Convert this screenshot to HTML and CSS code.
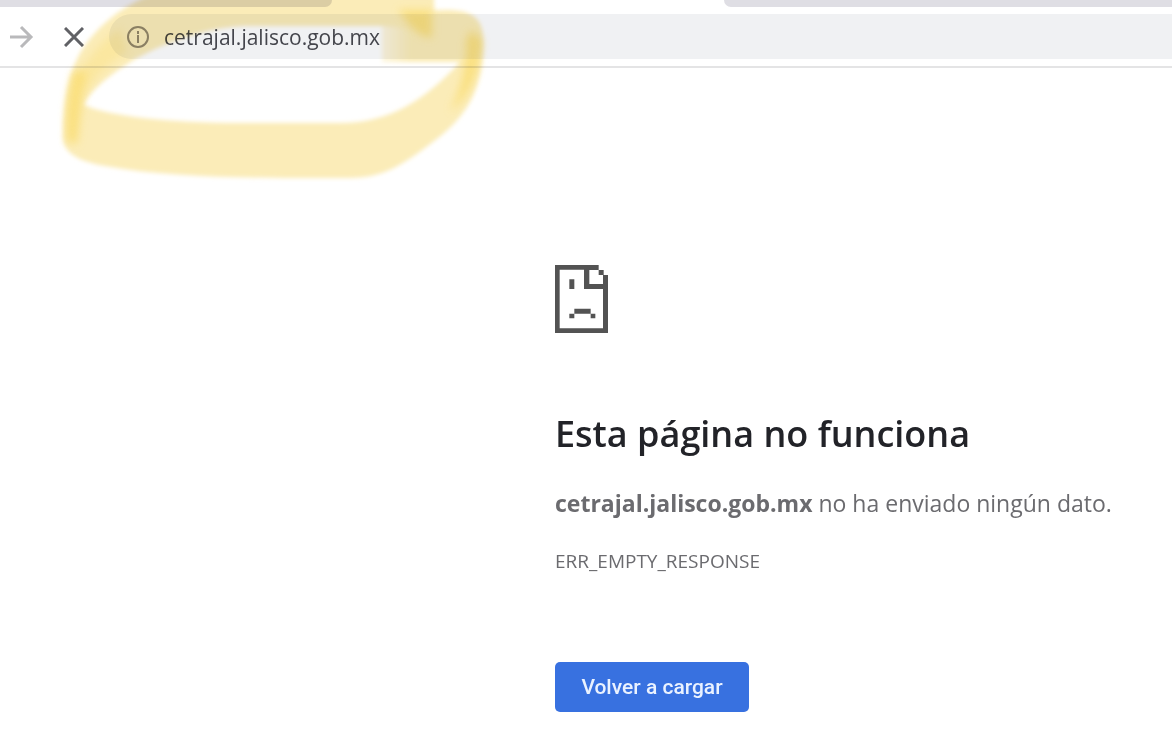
FILE: index.html
```html
<!DOCTYPE html>
<html lang="es">
<head>
	<meta charset="utf-8">
	<title>cetrajal.jalisco.gob.mx</title>
	<link rel="stylesheet" href="styles.css">
</head>

<body>

	<header class="browser">
		<div class="tabs">
			<div class="tab tab-left"></div>
			<div class="tab tab-right"></div>
		</div>
		<div class="toolbar">
			<button type="button" class="nav" aria-label="Adelante" disabled>
				<svg width="24" height="24" viewBox="0 0 24 24"><path d="M0 12H21M11 2L21 12L11 22"/></svg>
			</button>
			<button type="button" class="nav stop" aria-label="Detener">
				<svg width="20" height="20" viewBox="0 0 20 20"><path d="M1 1L19 19M19 1L1 19"/></svg>
			</button>
			<div class="address">
				<svg class="info" width="24" height="24" viewBox="0 0 24 24">
					<circle cx="12" cy="12" r="10"/>
					<path d="M12 10V18M12 6V9"/>
				</svg>
				<input type="text" class="url" aria-label="Dirección" value="cetrajal.jalisco.gob.mx">
			</div>
		</div>
	</header>

	<main class="error">
		<svg class="sad" width="53" height="68" viewBox="0 0 159 204">
			<path d="M0 0H131V15H103V57H144V30H159V204H0ZM14 14V190H144V72H87V14Z"/>
			<path d="M131 15H146V30H131ZM43 43H58V72H43ZM58 131H107V146H58ZM43 146H58V160H43ZM107 146H121V160H107Z"/>
		</svg>
		<h1>Esta página no funciona</h1>
		<p class="summary"><strong>cetrajal.jalisco.gob.mx</strong> no ha enviado ningún dato.</p>
		<p class="code">ERR_EMPTY_RESPONSE</p>
		<button type="button" class="reload">Volver a cargar</button>
	</main>

	<!-- highlighter stroke round the address -->
	<svg class="marker" width="500" height="190" viewBox="0 0 500 190">
		<defs>
			<filter id="soft"><feGaussianBlur stdDeviation="2"/></filter>
			<filter id="softer" x="-50%" y="-50%" width="200%" height="200%"><feGaussianBlur stdDeviation="4"/></filter>
			<linearGradient id="fade" gradientUnits="userSpaceOnUse" x1="380" y1="0" x2="410" y2="0">
				<stop offset="0" stop-color="#fbecb8" stop-opacity="0.4"/>
				<stop offset="1" stop-color="#fbecb8"/>
			</linearGradient>
		</defs>
		<g class="ink" filter="url(#soft)">
			<path d="M63 140C63 100 68 70 85 45C105 18 130 2 158 -8H434V34Q425 42 415 36Q404 26 385 26H245C200 28 160 45 132 61C105 78 92 90 84 104L78 145Z"/>
			<path d="M430 11C466 7 483 14 483 38C484 78 474 108 443 134C405 164 385 178 350 178C250 178 170 178 105 166C70 160 61 148 63 132C63 118 66 105 70 94L84 105C108 116 170 123 240 123H340C390 123 425 100 460 62H430Z"/>
			<path fill="url(#fade)" d="M382 26L404 26Q415 40 434 36V62H382Z"/>
		</g>
		<g class="ink-dark" filter="url(#softer)">
			<path d="M73 72Q64 105 67 142L77 144L86 70Z"/>
			<path d="M466 40Q468 75 450 112Q478 90 482 40L471 30Z"/>
			<path d="M398 10H432V38Q422 38 410 26Z"/>
		</g>
		<path class="ink-dark ink-light" filter="url(#softer)" d="M78 75Q95 45 120 28L128 52Q98 70 84 95Z"/>
	</svg>

</body>

</html>
```

FILE: styles.css
```css
* {
	box-sizing: border-box;
}

body {
	margin: 0;
	position: relative;
	background: #fff;
	color: #6b6b6f;
	font-family: "Open Sans", "Noto Sans", sans-serif;
}

.browser {
	border-bottom: 2px solid #e4e4e5;
}

.tabs {
	display: flex;
	justify-content: space-between;
	height: 7px;
}

.tab {
	background: #dfdee4;
}

.tab-left {
	width: 332px;
	border-bottom-right-radius: 8px;
}

.tab-right {
	width: calc(100% - 724px);
	border-bottom-left-radius: 10px;
}

.toolbar {
	display: flex;
	align-items: center;
	padding: 7px 0 7px 10px;
}

.nav {
	display: flex;
	justify-content: center;
	width: 24px;
	margin-right: 28px;
	padding: 0;
	border: 0;
	background: none;
}

.nav path {
	fill: none;
	stroke: #b9b9bb;
	stroke-width: 3;
}

.nav.stop {
	margin-right: 23px;
}

.stop path {
	stroke: #606165;
}

.address {
	flex: 1;
	display: flex;
	align-items: center;
	gap: 14px;
	height: 45px;
	padding-left: 17px;
	border-radius: 23px 0 0 23px;
	background: #f0f1f3;
}

.info {
	flex: none;
	fill: none;
	stroke: #8c8988;
	stroke-width: 2;
}

.url {
	flex: 1;
	min-width: 0;
	padding: 0;
	border: 0;
	outline: 0;
	background: none;
	color: #44454c;
	font-family: inherit;
	font-size: 21px;
}

.error {
	margin: 197px 0 0 555px;
}

.sad {
	display: block;
	fill: #535353;
}

h1 {
	margin: 73px 0 0;
	color: #222328;
	font-size: 36px;
	font-weight: 600;
	line-height: 56px;
}

.summary {
	margin: 25px 0 0;
	font-size: 23px;
	line-height: 32px;
}

.code {
	margin: 28px 0 0;
	font-size: 19px;
	line-height: 28px;
}

.reload {
	margin-top: 87px;
	width: 194px;
	height: 50px;
	border: 0;
	border-radius: 5px;
	background: #3871e0;
	color: #eaf2ff;
	font-family: Roboto, sans-serif;
	font-size: 21px;
	font-weight: 500;
}

.marker {
	position: absolute;
	top: 0;
	left: 0;
	pointer-events: none;
	mix-blend-mode: multiply;
}

.ink {
	fill: #fbecb8;
}

.ink-dark {
	fill: #fadb68;
	opacity: 0.7;
}

.ink-light {
	opacity: 0.3;
}
```
